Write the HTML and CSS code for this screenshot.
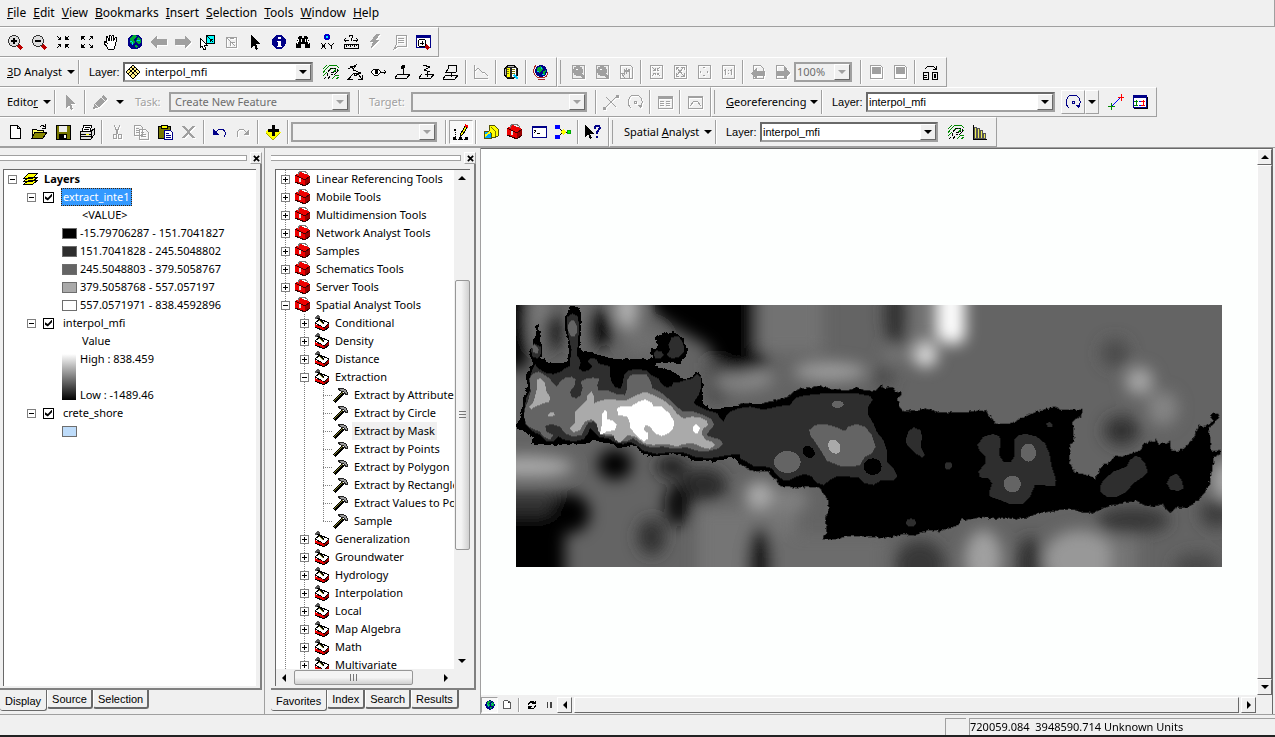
FILE: index.html
```html
<!DOCTYPE html>
<html lang="en">
<head>
    <meta charset="UTF-8">
    <meta name="viewport" content="width=device-width, initial-scale=1.0">
    <title>ArcMap</title>
    <link rel="stylesheet" href="styles.css">
</head>
<body>
    <svg class="sprite" aria-hidden="true">
        <symbol id="zoom-in" viewBox="0 0 16 16"><path d="M11 11l4 4" stroke="#b00" stroke-width="3"/><circle cx="7" cy="7" r="5.500" fill="#ddd" stroke="#333"/><path d="M4 7h6M7 4v6" stroke="#000" stroke-width="2"/></symbol>
        <symbol id="zoom-out" viewBox="0 0 16 16"><path d="M11 11l4 4" stroke="#b00" stroke-width="3"/><circle cx="7" cy="7" r="5.500" fill="#ddd" stroke="#333"/><path d="M4 7h6" stroke="#000" stroke-width="2"/></symbol>
        <symbol id="arrows-in" viewBox="0 0 16 16"><path d="M2 2l4 4M14 2l-4 4M2 14l4-4M14 14l-4-4" stroke="currentColor"/><path d="M6 2v4H2zM10 2v4h4zM6 14v-4H2zM10 14v-4h4z" fill="currentColor"/></symbol>
        <symbol id="arrows-out" viewBox="0 0 16 16"><path d="M2 2l4 4M14 2l-4 4M2 14l4-4M14 14l-4-4" stroke="currentColor"/><path d="M2 6V2h4zM14 6V2h-4zM2 10v4h4zM14 10v4h-4z" fill="currentColor"/></symbol>
        <symbol id="hand" viewBox="0 0 16 16"><path d="M5 15c0-2-3-4-4-6 0-2 2-1 3 0L3 4c0-2 2-2 2 0l1 3V2c0-1 2-1 2 0v5l1-5c0-1 2-1 2 0l-1 5 2-3c1-1 2 0 2 1-1 3-2 5-2 7l-1 3z" fill="#fff" stroke="#000"/></symbol>
        <symbol id="globe" viewBox="0 0 16 16"><circle cx="8" cy="8" r="7.500" fill="#008"/><path d="M3 4l4-3 3 1-2 3-2 1 2 2-2 3-3-2zM11 3l3 2v4l-3 1-2-3zM8 11l3 1-2 3z" fill="#0a3"/><path d="M3 7l2 1 1 3M10 6l3 1" stroke="#0cf" fill="none"/></symbol>
        <symbol id="back" viewBox="0 0 16 16"><path d="M0 8l6-7v4h10v6H6v4z" fill="#a0a0a0"/></symbol>
        <symbol id="forward" viewBox="0 0 16 16"><path d="M16 8l-6-7v4H0v6h10v4z" fill="#a0a0a0"/></symbol>
        <symbol id="select-feature" viewBox="0 0 16 16"><path d="M7 1h8v8H7z" fill="#0ff" stroke="#000"/><path d="M8 2l6 6M11 8V5h3" stroke="#000" fill="none"/><path d="M1 4v10l2-2 2 4 2-1-2-4h3z" fill="#fff" stroke="#000"/></symbol>
        <symbol id="clear-select" viewBox="0 0 16 16"><path d="M3 3h10v10H3zM4 4l8 8M7 12V8h5M7 5l4-1" stroke="#a0a0a0" fill="none"/></symbol>
        <symbol id="pointer" viewBox="0 0 16 16"><path d="M4 1v13l3-3 2 5 2-1-2-5h4z" fill="currentColor"/></symbol>
        <symbol id="info" viewBox="0 0 16 16"><circle cx="8" cy="8" r="7" fill="#008"/><path d="M7 3h3v2H7zM6 7h4v5h1v1H6v-1h1V8H6z" fill="#fff"/></symbol>
        <symbol id="binoculars" viewBox="0 0 16 16"><path d="M4 2h3v2h2V2h3l3 8v4h-5v-4H6v4H1v-4z" fill="#000"/><path d="M4 5l-2 5M6 5v3M10 5v3M12 5l2 5" stroke="#fff"/></symbol>
        <symbol id="xy" viewBox="0 0 16 16"><circle cx="8" cy="3" r="2" fill="#0ff" stroke="#00c" stroke-width="2"/><path d="M2 9l5 6M7 9l-5 6M9 9l3 3 3-3M12 12v3" stroke="#000" fill="none"/></symbol>
        <symbol id="measure" viewBox="0 0 16 16"><path d="M1 10h14v4H1zM3 11v2M5 11v1M7 11v2M9 11v1M11 11v2M13 11v1M1 6h5M10 6h5M3 4L1 6l2 2M13 4l2 2-2 2M6 3l1-2h2l1 2-2 2v2" fill="none" stroke="#000"/></symbol>
        <symbol id="bolt" viewBox="0 0 16 16"><path d="M9 0h4L9 6h3L3 16l3-8H3z" fill="#a0a0a0"/></symbol>
        <symbol id="popup" viewBox="0 0 16 16"><path d="M5 1h10v11H8l-5 3 2-4zM7 4h6M7 6h6M7 8h6" fill="none" stroke="#a0a0a0"/></symbol>
        <symbol id="viewer" viewBox="0 0 16 16"><path d="M1 1h14v12H1z" fill="#fff" stroke="#008"/><path d="M1 1h14v3H1z" fill="#008"/><path d="M10 11l4 4" stroke="#b00" stroke-width="3"/><circle cx="7" cy="9" r="4" fill="#fff" stroke="#000"/><path d="M5 9h4M7 7v4" stroke="#000"/></symbol>
        <symbol id="raster" viewBox="0 0 16 16"><path d="M8 1l7 7-7 7-7-7z" fill="#fe8" stroke="#000"/><path d="M4 5l7 7M6 3l7 7M12 5l-7 7M10 3l-7 7" stroke="#000"/></symbol>
        <symbol id="contours" viewBox="0 0 16 16"><g fill="none"><path d="M0 5l4-4M0 9l3-4 4-4h6l3 3M0 12l4-4M6 6l3-2h3l1 2-3 2H8M9 15l3-3 4-1M13 15l3-2M14 8l2-2" stroke="#080"/><path d="M1 15l3-3 1-4 3-4h5l2 3-3 3-4 1-3 4M5 15l2-4M8 8l3 1 2-2" stroke="#000" stroke-dasharray="3 1"/></g></symbol>
        <symbol id="steepest" viewBox="0 0 16 16"><path d="M1 5l8-4-3 5 8 3-6 1M2 14l5-5 1 3 3-2 4 5M3 2l4 3M4 13l-3 2h5M15 11v4h-4" stroke="#000" fill="none"/></symbol>
        <symbol id="sight" viewBox="0 0 16 16"><path d="M0 8l3-3h4l3 3-3 3H3z" fill="#fff" stroke="#000"/><path d="M4 6h3v4H4z" fill="#000"/><path d="M10 8h5M13 6l2 2-2 2" stroke="#000" fill="none"/></symbol>
        <symbol id="point3d" viewBox="0 0 16 16"><circle cx="8" cy="3" r="2" fill="#000"/><path d="M8 5v6M3 10h12l-3 4H0z" stroke="#000" fill="none"/></symbol>
        <symbol id="line3d" viewBox="0 0 16 16"><path d="M4 1l7 2-6 3 6 2M6 10h9l-3 4H0l3-4M8 8v5" stroke="#000" fill="none"/></symbol>
        <symbol id="poly3d" viewBox="0 0 16 16"><path d="M5 1h9l-1 7H3l3-4zM3 11l-3 4h12l3-4zM8 8v5" stroke="#000" fill="none"/></symbol>
        <symbol id="profile" viewBox="0 0 16 16"><path d="M1 1v13h14M1 8l4-4 4 4h2l4 4" stroke="#a0a0a0" fill="none"/></symbol>
        <symbol id="catalog" viewBox="0 0 16 16"><circle cx="8" cy="8" r="7" fill="#bbb" stroke="#000"/><path d="M3 3h4v10H3z" fill="#ff0" stroke="#222"/><path d="M8 3h5v10H8z" fill="#fff" stroke="#222"/><path d="M4 5h2M4 7h2M4 9h2M9 5h3M9 7h3M9 9h3" stroke="#770"/><path d="M11 11l4 4" stroke="#0cf" stroke-width="2"/></symbol>
        <symbol id="scene" viewBox="0 0 16 16"><circle cx="8" cy="7" r="6" fill="#008"/><path d="M4 4l4-2 2 3-3 4-3-1zM10 7l3-1-1 5-2-1z" fill="#0a3"/><path d="M3 1C-2 7 2 14 8 14s6-3 7-6M5 15h7" stroke="#a22" fill="none"/><path d="M4 7h2M8 3v2M9 10h2" stroke="#0cf"/></symbol>
        <symbol id="page-zoom" viewBox="0 0 16 16"><path d="M2 1h12v13H2z" stroke="#a0a0a0" fill="#eee"/><circle cx="8" cy="7" r="5" fill="#a0a0a0"/><path d="M10 9l4 5" stroke="#a0a0a0" stroke-width="3"/><path d="M6 5h2v1H6z" fill="#fff"/></symbol>
        <symbol id="page-hand" viewBox="0 0 16 16"><path d="M2 1h10l2 2v11H2z" stroke="#a0a0a0" fill="none"/><path d="M7 14l-4-5 3 1V5l2 3V4l2 4 1-3 1 4-1 5z" fill="#eee" stroke="#a0a0a0"/></symbol>
        <symbol id="page-in" viewBox="0 0 16 16"><path d="M2 1h12v13H2z" stroke="#a0a0a0" fill="none"/><path d="M4 3l3 3M12 3L9 6M4 12l3-3M12 12L9 9M7 4v2H5M9 4v2h2M7 11V9H5M9 11V9h2" stroke="#a0a0a0" fill="none"/></symbol>
        <symbol id="page-out" viewBox="0 0 16 16"><path d="M2 1h12v13H2z" stroke="#a0a0a0" fill="none"/><path d="M4 3l8 9M12 3l-8 9M4 6V3h3M12 6V3H9M4 9v3h3M12 9v3H9" stroke="#a0a0a0" fill="none"/></symbol>
        <symbol id="page-whole" viewBox="0 0 16 16"><path d="M2 1h12v13H2z" stroke="#a0a0a0" fill="none"/><path d="M7 3h2v1H7zM7 11h2v1H7zM4 7h1v2H4zM11 7h1v2h-1z" fill="#a0a0a0"/></symbol>
        <symbol id="page-one" viewBox="0 0 16 16"><path d="M2 1h12v13H2zM5 5v6M4 6h1M11 5v6M10 6h1M8 6v1M8 9v1" stroke="#a0a0a0" fill="none"/></symbol>
        <symbol id="page-back" viewBox="0 0 16 16"><path d="M3 1h7l3 3v10H3z" stroke="#a0a0a0" fill="none"/><path d="M1 9l6-6v4h8v5H7v4z" fill="#a0a0a0"/></symbol>
        <symbol id="page-forward" viewBox="0 0 16 16"><path d="M2 1h7l3 3v10H2z" stroke="#a0a0a0" fill="none"/><path d="M16 9l-6-6v4H2v5h8v4z" fill="#a0a0a0"/></symbol>
        <symbol id="draft" viewBox="0 0 16 16"><path d="M2 1h10l2 2v11H2z" stroke="#a0a0a0" fill="#fff"/><path d="M4 3h9v7H4z" fill="#a0a0a0"/></symbol>
        <symbol id="swap" viewBox="0 0 16 16"><path d="M1 8h5v7H1zM10 8h5v7h-5zM2 11h3M2 13h3M12 10h1v3h-1zM3 5l3-3h5l3 3M14 2v3h-3" stroke="#000" fill="none"/></symbol>
        <symbol id="pencil" viewBox="0 0 16 16"><path d="M1 15l2-6 8-8 4 4-8 8z" fill="#a0a0a0"/><path d="M9 3l4 4M3 10l3 3" stroke="#eee"/></symbol>
        <symbol id="split" viewBox="0 0 16 16"><path d="M3 3l10 10M2 14L14 2M8 8l2-2" stroke="#a0a0a0" fill="none"/><path d="M0 13h3v3H0zM13 1h3v3h-3z" fill="#a0a0a0"/></symbol>
        <symbol id="rotate" viewBox="0 0 16 16"><path d="M4 14C-1 10 1 1 8 1s9 8 5 12" stroke="currentColor" fill="none"/><path d="M7 7h2v2H7z" fill="none" stroke="currentColor"/><path d="M11 11h4l-1 4z" fill="currentColor"/></symbol>
        <symbol id="attributes" viewBox="0 0 16 16"><path d="M1 2h14v12H1z" stroke="#a0a0a0" fill="none"/><path d="M1 2h14v3H1zM3 7h4v1H3zM9 7h4v1H9zM3 9h4v1H3zM9 9h4v1H9zM3 11h4v1H3zM9 11h4v1H9z" fill="#a0a0a0"/></symbol>
        <symbol id="sketch-props" viewBox="0 0 16 16"><path d="M1 2h14v12H1z" stroke="#a0a0a0" fill="none"/><path d="M1 2h14v2H1z" fill="#a0a0a0"/><path d="M3 12l4-5h3l4 5" stroke="#a0a0a0" fill="none"/></symbol>
        <symbol id="control-points" viewBox="0 0 16 16"><path d="M4 12l8-8" stroke="#00f"/><path d="M3 9v7M0 12h7" stroke="#080"/><path d="M13 0v7M10 3h6" stroke="#f00"/></symbol>
        <symbol id="link-table" viewBox="0 0 16 16"><path d="M2 3h14v12H2z" fill="#000"/><path d="M1 2h13v11H1z" fill="#fff" stroke="#008"/><path d="M1 1h14v3H1z" fill="#008"/><path d="M2 7h4M4 6v3M2 11h4M4 9v3" stroke="#080"/><path d="M9 7h4M11 6v3M9 11h4M11 9v3" stroke="#f00"/><path d="M7 7h2M7 11h2" stroke="#00f"/></symbol>
        <symbol id="new" viewBox="0 0 16 16"><path d="M3 1h7l3 3v10H3zM10 1v3h3" fill="#fff" stroke="#000"/></symbol>
        <symbol id="open" viewBox="0 0 16 16"><path d="M1 14V5h4l1 1h6v3" fill="#ff6" stroke="#000"/><path d="M1 14l3-6h12l-4 6z" fill="#880" stroke="#000"/><path d="M9 3l2-2 3 2M14 0v4h-3" stroke="#000" fill="none"/></symbol>
        <symbol id="save" viewBox="0 0 16 16"><path d="M1 1h14v14H1z" fill="#770" stroke="#000"/><path d="M4 2h8v6H4z" fill="#eee"/><path d="M4 10h8v5H4z" fill="#000"/><path d="M9 11h2v3H9z" fill="#fff"/></symbol>
        <symbol id="print" viewBox="0 0 16 16"><path d="M5 1h8l-2 6H3z" fill="#fff" stroke="#000"/><path d="M6 3h5M5 5h5" stroke="#000"/><path d="M1 7h11l3-2v6l-3 4H1z" fill="#ddd" stroke="#000"/><path d="M1 10h11M1 12h11M12 7v8" stroke="#000"/><path d="M7 10h3v1H7z" fill="#ff0"/></symbol>
        <symbol id="cut" viewBox="0 0 16 16"><path d="M5 1l4 9M11 1L7 10" stroke="#a0a0a0"/><path d="M4 10h3v4H4zM9 10h3v4H9z" stroke="#a0a0a0" fill="none"/></symbol>
        <symbol id="copy" viewBox="0 0 16 16"><path d="M1 1h6l2 2v8H1zM6 5h6l3 3v7H6zM3 4h3M3 6h3M3 8h3M8 8h3M8 10h5M8 12h5" stroke="#a0a0a0" fill="none"/></symbol>
        <symbol id="paste" viewBox="0 0 16 16"><path d="M1 2h12v12H1z" fill="#770" stroke="#000"/><path d="M4 1h6v3H4z" fill="#ff0" stroke="#000"/><path d="M7 6h6l2 2v7H7z" fill="#fff" stroke="#008"/><path d="M9 9h3M9 11h5M9 13h5" stroke="#008"/></symbol>
        <symbol id="delete" viewBox="0 0 16 16"><path d="M2 2l11 12M13 2L2 14" stroke="#a0a0a0" stroke-width="2"/></symbol>
        <symbol id="undo" viewBox="0 0 16 16"><path d="M4 9l4-4h4l2 3v3l-1 2" stroke="#008" fill="none"/><path d="M2 5v6h6z" fill="#008"/></symbol>
        <symbol id="redo" viewBox="0 0 16 16"><path d="M12 9L8 5H5L2 8v3l1 2" stroke="#a0a0a0" fill="none"/><path d="M14 5v6H8z" fill="#a0a0a0"/></symbol>
        <symbol id="add-data" viewBox="0 0 16 16"><path d="M0 8l4-3h8l4 3-8 8z" fill="#ff0"/><path d="M1 9l7 7 7-7" stroke="#aa0" fill="none"/><path d="M7 1h3v4h4v3h-4v4H7V8H3V5h4z" fill="#000"/></symbol>
        <symbol id="editor-bar" viewBox="0 0 16 16"><path d="M0 13h3v3H0zM1 5h2v2H1zM6 13h3v3H6zM12 13h3v3h-3z" fill="#000"/><path d="M2 8v5M3 15h9" stroke="#000" stroke-dasharray="1 1"/><path d="M7 13l1-4 5-8 2 1-5 8z" fill="#ff0" stroke="#000"/><path d="M12 1l3 2" stroke="#f00" stroke-width="2"/></symbol>
        <symbol id="arc-catalog" viewBox="0 0 16 16"><path d="M6 1h5l4 4v7l-5 2-4-4z" fill="#ff0" stroke="#550"/><path d="M8 3l4 4v5" stroke="#770" fill="none"/><path d="M1 7h5l2 2v5H1z" fill="#0af" stroke="#550"/><path d="M2 12l5-4" stroke="#ff0" stroke-width="2"/></symbol>
        <symbol id="toolbox" viewBox="0 0 16 16"><path d="M0 4l6-3 9 4v6l-5 4-10-4z" fill="#e00"/><path d="M10 9l5-4v6l-5 4z" fill="#900"/><path d="M0 4l10 5 5-4" stroke="#400" fill="none"/><path d="M0 11l10 4 5-4" stroke="#300" fill="none"/><path d="M3 4V2l3-2h3l3 2v2" stroke="#777" fill="none"/><path d="M4 7h2v4H4z" fill="#ddd"/></symbol>
        <symbol id="toolset" viewBox="0 0 16 16"><path d="M1 8l5-4 9 4-5 5z" fill="#fff" stroke="#000"/><path d="M1 9l9 4v3l-9-4z" fill="#e00"/><path d="M10 13l5-4v3l-5 4z" fill="#900"/><path d="M1 12l9 4 5-4" stroke="#000" fill="none"/><path d="M3 2l7 7" stroke="#000" stroke-width="2"/><path d="M5 5l4 4" stroke="#aa4"/><path d="M1 4l3-3 2 2" stroke="#555" stroke-width="2" fill="none"/></symbol>
        <symbol id="hammer" viewBox="0 0 16 16"><path d="M1 15L10 6" stroke="#000" stroke-width="3"/><path d="M1 14l9-9" stroke="#883"/><path d="M5 2l4-1 4 2 2 4-2 1-2-3-3-1z" fill="#999" stroke="#222"/></symbol>
        <symbol id="command" viewBox="0 0 16 16"><path d="M1 2h14v11H1z" fill="#fff" stroke="#008"/><path d="M1 2h14v2H1z" fill="#008"/><path d="M3 6l2 1-2 2M6 9h3" stroke="#000" fill="none"/></symbol>
        <symbol id="model" viewBox="0 0 16 16"><path d="M3 3l5 5h6M3 13l5-5" stroke="#000" fill="none"/><path d="M0 1h5v4H0zM0 11h5v4H0z" fill="#00f"/><path d="M8 5l3 3-3 3-3-3z" fill="#ff0"/><circle cx="14" cy="8" r="2" fill="#0f0" stroke="#0a0"/></symbol>
        <symbol id="whats-this" viewBox="0 0 16 16"><path d="M0 1v12l3-3 2 5 2-1-2-4h4z" fill="#000"/><path d="M10 5V3l1-1h3l1 2-3 4v2" stroke="#008" stroke-width="2" fill="none"/><path d="M11 12h2v2h-2z" fill="#008"/></symbol>
        <symbol id="histogram" viewBox="0 0 16 16"><path d="M2 3h2v11H2zM5 4h2v10H5zM8 6h2v8H8zM11 9h2v5h-2z" fill="#ee5" stroke="#555"/><path d="M1 1v14h14" stroke="#000" fill="none"/></symbol>
        <symbol id="layers" viewBox="0 0 16 16"><path d="M1 13h9l5-4H6zM1 10h9l5-4H6zM1 7h9l5-5H6z" fill="#ff0" stroke="#000"/></symbol>
        <symbol id="refresh" viewBox="0 0 16 16"><path d="M2 7l3-4h5l3 2M13 1v5H8M14 9l-3 4H6l-3-2M3 15v-5h5" stroke="#000" fill="none" stroke-width="2"/></symbol>
        <symbol id="close" viewBox="0 0 8 8"><path d="M1 1l6 6M7 1L1 7" stroke="#000" stroke-width="2"/></symbol>
        <symbol id="pause" viewBox="0 0 16 16"><path d="M4 3h3v10H4zM9 3h3v10H9z" fill="#444"/></symbol>
    </svg>

    <nav class="menubar">
        <a href="#"><u>F</u>ile</a>
        <a href="#"><u>E</u>dit</a>
        <a href="#"><u>V</u>iew</a>
        <a href="#"><u>B</u>ookmarks</a>
        <a href="#"><u>I</u>nsert</a>
        <a href="#"><u>S</u>election</a>
        <a href="#"><u>T</u>ools</a>
        <a href="#"><u>W</u>indow</a>
        <a href="#"><u>H</u>elp</a>
    </nav>

    <div class="toolbar-row">
        <div class="toolbar">
            <button class="tool" aria-label="Zoom in"><svg><use href="#zoom-in"/></svg></button>
            <button class="tool" aria-label="Zoom out"><svg><use href="#zoom-out"/></svg></button>
            <button class="tool" aria-label="Fixed zoom in"><svg><use href="#arrows-in"/></svg></button>
            <button class="tool" aria-label="Fixed zoom out"><svg><use href="#arrows-out"/></svg></button>
            <button class="tool" aria-label="Pan"><svg><use href="#hand"/></svg></button>
            <button class="tool" aria-label="Full extent"><svg><use href="#globe"/></svg></button>
            <button class="tool" aria-label="Previous extent" disabled><svg><use href="#back"/></svg></button>
            <button class="tool" aria-label="Next extent" disabled><svg><use href="#forward"/></svg></button>
            <button class="tool" aria-label="Select features"><svg><use href="#select-feature"/></svg></button>
            <button class="tool" aria-label="Clear selection" disabled><svg><use href="#clear-select"/></svg></button>
            <button class="tool" aria-label="Select elements"><svg><use href="#pointer"/></svg></button>
            <button class="tool" aria-label="Identify"><svg><use href="#info"/></svg></button>
            <button class="tool" aria-label="Find"><svg><use href="#binoculars"/></svg></button>
            <button class="tool" aria-label="Go to XY"><svg><use href="#xy"/></svg></button>
            <button class="tool" aria-label="Measure"><svg><use href="#measure"/></svg></button>
            <button class="tool" aria-label="Hyperlink" disabled><svg><use href="#bolt"/></svg></button>
            <button class="tool" aria-label="HTML popup" disabled><svg><use href="#popup"/></svg></button>
            <button class="tool" aria-label="Create viewer"><svg><use href="#viewer"/></svg></button>
        </div>
    </div>

    <div class="toolbar-row">
        <div class="toolbar">
            <button class="menu-button menu-3d"><span><u>3</u>D Analyst</span><i class="caret"></i></button>
            <span class="sep"></span>
            <label class="tool-label" for="layer3d">Layer:</label>
            <div class="combo combo-3d">
                <svg><use href="#raster"/></svg>
                <select id="layer3d" class="ui-text"><option>interpol_mfi</option></select>
                <span class="drop"><i class="caret"></i></span>
            </div>
            <button class="tool" aria-label="Contour"><svg><use href="#contours"/></svg></button>
            <button class="tool" aria-label="Steepest path"><svg><use href="#steepest"/></svg></button>
            <button class="tool" aria-label="Line of sight"><svg><use href="#sight"/></svg></button>
            <button class="tool" aria-label="Interpolate point"><svg><use href="#point3d"/></svg></button>
            <button class="tool" aria-label="Interpolate line"><svg><use href="#line3d"/></svg></button>
            <button class="tool" aria-label="Interpolate polygon"><svg><use href="#poly3d"/></svg></button>
            <span class="sep"></span>
            <button class="tool" aria-label="Profile graph" disabled><svg><use href="#profile"/></svg></button>
            <span class="sep"></span>
            <button class="tool" aria-label="ArcCatalog"><svg><use href="#catalog"/></svg></button>
            <span class="sep"></span>
            <button class="tool" aria-label="ArcScene"><svg><use href="#scene"/></svg></button>
        </div>
        <div class="toolbar docked">
            <span class="grip"></span>
            <button class="tool" aria-label="Zoom in page" disabled><svg><use href="#page-zoom"/></svg></button>
            <button class="tool" aria-label="Zoom out page" disabled><svg><use href="#page-zoom"/></svg></button>
            <button class="tool" aria-label="Pan page" disabled><svg><use href="#page-hand"/></svg></button>
            <span class="sep"></span>
            <button class="tool" aria-label="Fixed zoom in page" disabled><svg><use href="#page-in"/></svg></button>
            <button class="tool" aria-label="Fixed zoom out page" disabled><svg><use href="#page-out"/></svg></button>
            <button class="tool" aria-label="Whole page" disabled><svg><use href="#page-whole"/></svg></button>
            <button class="tool" aria-label="Zoom to 100%" disabled><svg><use href="#page-one"/></svg></button>
            <span class="sep"></span>
            <button class="tool" aria-label="Back extent" disabled><svg><use href="#page-back"/></svg></button>
            <button class="tool" aria-label="Forward extent" disabled><svg><use href="#page-forward"/></svg></button>
            <div class="combo combo-zoom disabled">
                <select class="ui-text" aria-label="Page zoom" disabled><option>100%</option></select>
                <span class="drop"><i class="caret"></i></span>
            </div>
            <span class="sep"></span>
            <button class="tool" aria-label="Draft mode" disabled><svg><use href="#draft"/></svg></button>
            <button class="tool" aria-label="Focus data frame" disabled><svg><use href="#draft"/></svg></button>
            <span class="sep"></span>
            <button class="tool" aria-label="Change layout"><svg><use href="#swap"/></svg></button>
        </div>
    </div>

    <div class="toolbar-row">
        <div class="toolbar">
            <button class="menu-button menu-editor"><span>Edito<u>r</u></span><i class="caret"></i></button>
            <span class="sep"></span>
            <button class="tool" aria-label="Edit tool" disabled><svg><use href="#pointer"/></svg></button>
            <span class="sep"></span>
            <button class="tool" aria-label="Sketch tool" disabled><svg><use href="#pencil"/></svg></button>
            <button class="drop-only" aria-label="Sketch tools"><i class="caret"></i></button>
            <label class="tool-label ui-text off" for="task">Task:</label>
            <div class="combo combo-task disabled">
                <select id="task" class="ui-text" disabled><option>Create New Feature</option></select>
                <span class="drop"><i class="caret"></i></span>
            </div>
            <span class="sep"></span>
            <label class="tool-label ui-text off wide" for="target">Target:</label>
            <div class="combo combo-target disabled">
                <select id="target" disabled></select>
                <span class="drop"><i class="caret"></i></span>
            </div>
            <span class="sep"></span>
            <button class="tool" aria-label="Split" disabled><svg><use href="#split"/></svg></button>
            <button class="tool" aria-label="Rotate" disabled><svg><use href="#rotate"/></svg></button>
            <span class="sep"></span>
            <button class="tool" aria-label="Attributes" disabled><svg><use href="#attributes"/></svg></button>
            <span class="sep"></span>
            <button class="tool" aria-label="Sketch properties" disabled><svg><use href="#sketch-props"/></svg></button>
        </div>
        <div class="toolbar docked docked-menu">
            <span class="grip"></span>
            <button class="menu-button menu-georef"><span><u>G</u>eoreferencing</span><i class="caret"></i></button>
            <span class="sep"></span>
            <label class="tool-label" for="georefLayer">Layer:</label>
            <div class="combo combo-georef">
                <select id="georefLayer"><option>interpol_mfi</option></select>
                <span class="drop"><i class="caret"></i></span>
            </div>
            <button class="tool raised navy" aria-label="Rotate raster"><svg><use href="#rotate"/></svg></button>
            <button class="drop-only raised" aria-label="Rotate options"><i class="caret"></i></button>
            <button class="tool" aria-label="Add control points"><svg><use href="#control-points"/></svg></button>
            <button class="tool" aria-label="View link table"><svg><use href="#link-table"/></svg></button>
        </div>
    </div>

    <div class="toolbar-row">
        <div class="toolbar">
            <button class="tool" aria-label="New"><svg><use href="#new"/></svg></button>
            <button class="tool" aria-label="Open"><svg><use href="#open"/></svg></button>
            <button class="tool" aria-label="Save"><svg><use href="#save"/></svg></button>
            <button class="tool" aria-label="Print"><svg><use href="#print"/></svg></button>
            <span class="sep"></span>
            <button class="tool" aria-label="Cut" disabled><svg><use href="#cut"/></svg></button>
            <button class="tool" aria-label="Copy" disabled><svg><use href="#copy"/></svg></button>
            <button class="tool" aria-label="Paste"><svg><use href="#paste"/></svg></button>
            <button class="tool" aria-label="Delete" disabled><svg><use href="#delete"/></svg></button>
            <span class="sep"></span>
            <button class="tool" aria-label="Undo"><svg><use href="#undo"/></svg></button>
            <button class="tool" aria-label="Redo" disabled><svg><use href="#redo"/></svg></button>
            <span class="sep"></span>
            <button class="tool" aria-label="Add data"><svg><use href="#add-data"/></svg></button>
            <span class="sep"></span>
            <div class="combo combo-scale disabled">
                <select aria-label="Map scale" disabled></select>
                <span class="drop"><i class="caret"></i></span>
            </div>
            <span class="sep"></span>
            <button class="tool pressed" aria-label="Editor toolbar"><svg><use href="#editor-bar"/></svg></button>
            <span class="sep"></span>
            <button class="tool" aria-label="ArcCatalog"><svg><use href="#arc-catalog"/></svg></button>
            <button class="tool" aria-label="ArcToolbox"><svg><use href="#toolbox"/></svg></button>
            <button class="tool" aria-label="Command line"><svg><use href="#command"/></svg></button>
            <button class="tool" aria-label="ModelBuilder"><svg><use href="#model"/></svg></button>
            <span class="sep"></span>
            <button class="tool" aria-label="What's this?"><svg><use href="#whats-this"/></svg></button>
        </div>
        <div class="toolbar docked docked-menu">
            <span class="grip"></span>
            <button class="menu-button menu-spatial"><span>Spatial <u>A</u>nalyst</span><i class="caret"></i></button>
            <span class="sep"></span>
            <label class="tool-label" for="saLayer">Layer:</label>
            <div class="combo combo-spatial">
                <select id="saLayer"><option>interpol_mfi</option></select>
                <span class="drop"><i class="caret"></i></span>
            </div>
            <button class="tool" aria-label="Create contour"><svg><use href="#contours"/></svg></button>
            <button class="tool" aria-label="Histogram"><svg><use href="#histogram"/></svg></button>
        </div>
    </div>

    <main class="workspace">
        <section class="panel panel-toc">
            <div class="panel-head"><span class="handle"></span><button class="close" aria-label="Close"><svg><use href="#close"/></svg></button></div>
            <div class="panel-frame">
                <ul class="toc">
                    <li class="root"><button class="box minus" aria-label="Collapse"></button><svg><use href="#layers"/></svg><b>Layers</b></li>
                    <li class="layer"><button class="box minus" aria-label="Collapse"></button><input type="checkbox" id="l1" checked><label class="selected" for="l1">extract_inte1</label></li>
                    <li class="heading">&lt;VALUE&gt;</li>
                    <li class="legend"><i class="swatch s1"></i>-15.79706287 - 151.7041827</li>
                    <li class="legend"><i class="swatch s2"></i>151.7041828 - 245.5048802</li>
                    <li class="legend"><i class="swatch s3"></i>245.5048803 - 379.5058767</li>
                    <li class="legend"><i class="swatch s4"></i>379.5058768 - 557.057197</li>
                    <li class="legend"><i class="swatch s5"></i>557.0571971 - 838.4592896</li>
                    <li class="layer"><button class="box minus" aria-label="Collapse"></button><input type="checkbox" id="l2" checked><label for="l2">interpol_mfi</label></li>
                    <li class="heading">Value</li>
                    <li class="ramp-row"><i class="ramp"></i><div><span>High : 838.459</span><span>Low : -1489.46</span></div></li>
                    <li class="layer"><button class="box minus" aria-label="Collapse"></button><input type="checkbox" id="l3" checked><label for="l3">crete_shore</label></li>
                    <li class="legend"><i class="swatch s6"></i></li>
                </ul>
            </div>
            <div class="tabs">
                <button class="tab active">Display</button>
                <button class="tab">Source</button>
                <button class="tab">Selection</button>
            </div>
        </section>

        <section class="panel panel-toolbox">
            <div class="panel-head"><span class="handle"></span><button class="close" aria-label="Close"><svg><use href="#close"/></svg></button></div>
            <div class="panel-frame">
                <div class="tree-area">
                    <ul class="tree">
                        <li><span class="guide"><button class="box plus" aria-label="Expand"></button></span><svg><use href="#toolbox"/></svg>Linear Referencing Tools</li>
                        <li><span class="guide"><button class="box plus" aria-label="Expand"></button></span><svg><use href="#toolbox"/></svg>Mobile Tools</li>
                        <li><span class="guide"><button class="box plus" aria-label="Expand"></button></span><svg><use href="#toolbox"/></svg>Multidimension Tools</li>
                        <li><span class="guide"><button class="box plus" aria-label="Expand"></button></span><svg><use href="#toolbox"/></svg>Network Analyst Tools</li>
                        <li><span class="guide"><button class="box plus" aria-label="Expand"></button></span><svg><use href="#toolbox"/></svg>Samples</li>
                        <li><span class="guide"><button class="box plus" aria-label="Expand"></button></span><svg><use href="#toolbox"/></svg>Schematics Tools</li>
                        <li><span class="guide"><button class="box plus" aria-label="Expand"></button></span><svg><use href="#toolbox"/></svg>Server Tools</li>
                        <li><span class="guide"><button class="box minus" aria-label="Collapse"></button></span><svg><use href="#toolbox"/></svg>Spatial Analyst Tools</li>
                        <li><span class="guide"></span><span class="guide"><button class="box plus" aria-label="Expand"></button></span><svg><use href="#toolset"/></svg>Conditional</li>
                        <li><span class="guide"></span><span class="guide"><button class="box plus" aria-label="Expand"></button></span><svg><use href="#toolset"/></svg>Density</li>
                        <li><span class="guide"></span><span class="guide"><button class="box plus" aria-label="Expand"></button></span><svg><use href="#toolset"/></svg>Distance</li>
                        <li><span class="guide"></span><span class="guide"><button class="box minus" aria-label="Collapse"></button></span><svg><use href="#toolset"/></svg>Extraction</li>
                        <li><span class="guide"></span><span class="guide"></span><span class="guide leaf"></span><svg><use href="#hammer"/></svg>Extract by Attributes</li>
                        <li><span class="guide"></span><span class="guide"></span><span class="guide leaf"></span><svg><use href="#hammer"/></svg>Extract by Circle</li>
                        <li><span class="guide"></span><span class="guide"></span><span class="guide leaf"></span><svg><use href="#hammer"/></svg><span class="hot">Extract by Mask</span></li>
                        <li><span class="guide"></span><span class="guide"></span><span class="guide leaf"></span><svg><use href="#hammer"/></svg>Extract by Points</li>
                        <li><span class="guide"></span><span class="guide"></span><span class="guide leaf"></span><svg><use href="#hammer"/></svg>Extract by Polygon</li>
                        <li><span class="guide"></span><span class="guide"></span><span class="guide leaf"></span><svg><use href="#hammer"/></svg>Extract by Rectangle</li>
                        <li><span class="guide"></span><span class="guide"></span><span class="guide leaf"></span><svg><use href="#hammer"/></svg>Extract Values to Points</li>
                        <li><span class="guide"></span><span class="guide"></span><span class="guide leaf last"></span><svg><use href="#hammer"/></svg>Sample</li>
                        <li><span class="guide"></span><span class="guide"><button class="box plus" aria-label="Expand"></button></span><svg><use href="#toolset"/></svg>Generalization</li>
                        <li><span class="guide"></span><span class="guide"><button class="box plus" aria-label="Expand"></button></span><svg><use href="#toolset"/></svg>Groundwater</li>
                        <li><span class="guide"></span><span class="guide"><button class="box plus" aria-label="Expand"></button></span><svg><use href="#toolset"/></svg>Hydrology</li>
                        <li><span class="guide"></span><span class="guide"><button class="box plus" aria-label="Expand"></button></span><svg><use href="#toolset"/></svg>Interpolation</li>
                        <li><span class="guide"></span><span class="guide"><button class="box plus" aria-label="Expand"></button></span><svg><use href="#toolset"/></svg>Local</li>
                        <li><span class="guide"></span><span class="guide"><button class="box plus" aria-label="Expand"></button></span><svg><use href="#toolset"/></svg>Map Algebra</li>
                        <li><span class="guide"></span><span class="guide"><button class="box plus" aria-label="Expand"></button></span><svg><use href="#toolset"/></svg>Math</li>
                        <li><span class="guide"></span><span class="guide"><button class="box plus" aria-label="Expand"></button></span><svg><use href="#toolset"/></svg>Multivariate</li>
                    </ul>
                    <div class="vscroll">
                        <i class="tri up"></i>
                        <span class="track"><span class="thumb"></span></span>
                        <i class="tri down"></i>
                    </div>
                </div>
                <div class="hscroll">
                    <i class="tri left"></i>
                    <span class="track"><span class="thumb"></span></span>
                    <i class="tri right"></i>
                </div>
            </div>
            <div class="tabs">
                <button class="tab active">Favorites</button>
                <button class="tab">Index</button>
                <button class="tab">Search</button>
                <button class="tab">Results</button>
            </div>
        </section>

        <section class="view">
            <div class="view-body">
                <div class="canvas">
                    <svg class="map" viewBox="0 0 2118 786" role="img" aria-label="Interpolated raster clipped to the Crete shoreline">
                        <defs>
                            <filter id="soft" x="-10%" y="-10%" width="120%" height="120%"><feGaussianBlur stdDeviation="22"/></filter>
                            <filter id="coast" x="0" y="0" width="100%" height="100%"><feTurbulence type="fractalNoise" baseFrequency="0.09" numOctaves="2" seed="4"/><feDisplacementMap in="SourceGraphic" scale="10" xChannelSelector="R" yChannelSelector="G"/></filter>
                        </defs>
                        <rect width="2118" height="786" fill="#646464"/>
                        <!-- interpolated surface -->
                        <g filter="url(#soft)">
                            <g transform="translate(-18 -15)">
                                <path d="M560 620h300v240H560z" fill="#747474"/>
                                <path d="M-40-40h90v245H-40z" fill="#000"/>
                                <path d="M400-60h370v265l-60 30h-60l-60-100-90-50-60-40z" fill="#000"/>
                                <path d="M590 190h60v110h-60z" fill="#444"/>
                                <ellipse cx="90" cy="60" rx="28" ry="80" fill="#808080"/>
                                <ellipse cx="210" cy="60" rx="20" ry="80" fill="#777"/>
                                <ellipse cx="130" cy="95" rx="30" ry="55" fill="#181818"/>
                                <ellipse cx="270" cy="85" rx="40" ry="58" fill="#0c0c0c"/>
                                <ellipse cx="350" cy="25" rx="36" ry="60" fill="#b0b0b0"/>
                                <ellipse cx="400" cy="120" rx="60" ry="40" fill="#707070"/>
                                <ellipse cx="690" cy="245" rx="80" ry="28" fill="#848484"/>
                                <ellipse cx="50" cy="500" rx="140" ry="32" fill="#a8a8a8"/>
                                <path d="M-40 580h190v70H-40z" fill="#303030"/>
                                <path d="M-40 645h205v240H-40z" fill="#000"/>
                                <circle cx="180" cy="640" r="60" fill="#000"/>
                                <ellipse cx="315" cy="493" rx="52" ry="46" fill="#000"/>
                                <ellipse cx="485" cy="500" rx="48" ry="34" fill="#202020"/>
                                <ellipse cx="580" cy="555" rx="70" ry="50" fill="#2c2c2c"/>
                                <ellipse cx="505" cy="615" rx="42" ry="65" fill="#101010"/>
                                <ellipse cx="425" cy="710" rx="42" ry="55" fill="#303030"/>
                            </g>
                            <g transform="translate(672 -15)">
                                <path d="M-10-60h45v265h-45z" fill="#000"/>
                                <path d="M50-60h200v220H50z" fill="#727272"/>
                                <path d="M490-60h110v180H490z" fill="#747474"/>
                                <ellipse cx="55" cy="235" rx="45" ry="28" fill="#888"/>
                                <ellipse cx="270" cy="215" rx="110" ry="28" fill="#9c9c9c"/>
                                <ellipse cx="470" cy="45" rx="38" ry="100" fill="#303030"/>
                                <circle cx="430" cy="232" r="30" fill="#484848"/>
                                <ellipse cx="470" cy="160" rx="40" ry="25" fill="#777"/>
                                <path d="M598-60h78v180l-39 15-39-15z" fill="#fff"/>
                                <circle cx="557" cy="165" r="36" fill="#e0e0e0"/>
                                <ellipse cx="60" cy="585" rx="44" ry="40" fill="#acacac"/>
                                <ellipse cx="145" cy="600" rx="60" ry="38" fill="#808080"/>
                                <ellipse cx="60" cy="790" rx="38" ry="110" fill="#080808"/>
                                <path d="M110 700h330v160H110z" fill="#6c6c6c"/>
                                <ellipse cx="540" cy="795" rx="75" ry="75" fill="#383838"/>
                            </g>
                            <g transform="translate(1392 -15)">
                                <circle cx="405" cy="160" r="42" fill="#4c4c4c"/>
                                <circle cx="478" cy="243" r="42" fill="#a4a4a4"/>
                                <ellipse cx="548" cy="325" rx="46" ry="52" fill="#848484"/>
                                <ellipse cx="425" cy="392" rx="52" ry="44" fill="#303030"/>
                                <ellipse cx="460" cy="660" rx="110" ry="40" fill="#383838"/>
                                <ellipse cx="10" cy="775" rx="55" ry="85" fill="#a0a0a0"/>
                                <ellipse cx="150" cy="790" rx="38" ry="80" fill="#303030"/>
                                <ellipse cx="300" cy="780" rx="110" ry="90" fill="#989898"/>
                                <path d="M390 710h80v150h-80z" fill="#747474"/>
                                <ellipse cx="650" cy="800" rx="70" ry="40" fill="#484848"/>
                                <ellipse cx="710" cy="640" rx="50" ry="44" fill="#3c3c3c"/>
                                <ellipse cx="740" cy="540" rx="44" ry="60" fill="#a4a4a4"/>
                            </g>
                        </g>
                        <!-- class 1: coastline silhouette -->
                        <g fill="#000" filter="url(#coast)" shape-rendering="crispEdges">
                            <path transform="translate(-18 -15)" d="M18 375L30 360 35 345 32 330 40 315 40 290 48 285 45 265 55 260 48 235 50 220 60 210 58 200 70 195 68 180 60 170 58 150 68 140 68 120 78 108 76 75 86 75 84 90 92 92 90 125 97 135 97 165 92 175 105 178 115 188 145 190 172 186 175 170 178 150 172 110 165 85 164 55 172 40 178 22 190 18 205 24 212 38 212 65 214 90 210 115 208 145 220 152 245 158 270 166 305 174 340 178 380 177 420 178 432 170 420 160 425 145 440 148 445 135 435 118 437 108 455 104 468 97 480 98 492 97 505 105 520 115 526 135 532 150 528 170 515 180 512 192 495 190 478 188 465 190 450 184 432 195 455 205 480 210 500 222 515 232 530 240 545 230 560 216 572 225 578 250 577 280 580 300 582 315 600 325 625 328 645 322 665 320 690 316 715 312 760 312 760 515 730 505 720 508 712 495 690 490 680 480 665 470 645 478 622 482 610 488 590 480 560 484 540 478 530 468 510 466 490 460 465 465 440 468 425 470 405 465 390 455 382 440 365 435 350 440 325 445 310 432 290 430 270 426 255 418 235 430 215 434 195 430 160 432 140 438 125 432 110 436 90 430 78 438 65 430 68 415 60 403 45 400 38 390 22 388z"/>
                            <path transform="translate(672 -15)" d="M-5 312L20 310 45 315 75 308 110 300 145 290 160 275 180 265 215 262 240 255 250 263 280 264 300 270 325 270 355 262 370 270 405 274 418 262 424 250 430 265 445 262 458 262 468 275 485 278 475 295 478 320 490 333 530 332 555 326 575 330 595 337 650 337 700 335 735 332 760 360 760 645 730 650 700 655 680 660 665 658 655 675 630 685 600 693 570 690 540 697 525 708 490 702 465 710 420 714 380 710 350 710 320 708 300 715 270 720 248 718 250 708 258 700 257 650 266 640 264 600 250 580 238 563 200 560 170 562 120 558 110 540 95 530 85 515 50 515 30 510-5 490z"/>
                            <path transform="translate(1392 -15)" d="M-10 332L18 333 28 355 50 372 85 372 110 362 145 345 165 337 195 328 225 320 240 328 270 330 308 327 305 345 290 355 277 365 280 390 283 425 267 435 268 480 275 500 285 518 310 522 345 535 355 515 370 492 385 490 405 466 425 470 450 462 480 452 490 435 510 423 525 425 527 415 535 430 560 430 570 425 570 445 585 452 605 450 625 428 640 415 648 395 660 375 675 380 690 372 698 360 688 350 700 340 718 343 712 358 700 372 685 385 690 410 692 455 722 450 722 462 700 472 698 500 690 545 680 570 660 595 640 612 620 622 590 622 570 640 555 625 550 612 520 620 490 615 470 602 440 608 400 615 370 625 340 640 310 638 285 630 250 628 220 635 180 638 150 650 110 658 70 652 40 657 0 650-20 655z"/>
                        </g>
                        <!-- class 2 -->
                        <g fill="#2e2e2e" shape-rendering="crispEdges">
                            <path transform="translate(-18 -15)" d="M42 335L45 315 50 290 60 270 58 240 65 215 75 192 85 205 105 218 130 222 150 216 165 205 180 198 182 165 185 150 178 120 172 85 172 50 188 40 204 50 208 85 205 110 202 150 200 165 208 175 212 190 206 205 220 215 240 208 248 200 232 185 240 175 260 177 265 190 285 195 300 200 300 225 305 245 315 262 332 265 338 250 342 225 355 212 380 207 410 212 425 225 445 235 455 252 470 262 485 258 490 248 505 248 525 240 545 236 560 222 572 230 574 260 566 285 550 308 560 315 590 330 622 340 630 355 640 365 650 345 660 335 685 325 720 320 742 325 742 484 720 478 700 465 680 462 640 468 600 475 560 472 520 458 470 458 440 462 400 452 380 436 360 425 340 432 320 430 295 415 270 412 255 400 240 385 235 400 220 418 190 425 160 418 145 410 130 425 110 425 90 405 75 398 60 388 45 372z"/>
                            <path transform="translate(-18 -15)" d="M475 135L485 112 505 108 520 130 522 155 505 172 485 175 470 165 480 150zM430 160L440 152 455 155 462 165 450 175 435 174zM62 150L72 130 92 140 94 160 84 175 68 170z"/>
                            <path transform="translate(672 -15)" d="M0 325L45 325 75 328 120 318 150 315 165 295 185 288 230 282 270 280 310 280 350 280 390 288 398 300 385 320 385 345 400 370 410 395 430 420 440 450 440 485 460 505 473 530 460 540 425 540 400 555 375 550 355 532 320 530 290 530 270 540 250 555 230 548 215 530 195 522 170 530 150 540 130 540 110 525 95 505 75 500 40 498 20 485 0 475z"/>
                            <path transform="translate(672 -15)" d="M498 415L505 395 520 382 542 390 546 410 542 440 555 465 548 473 530 462 500 435z"/>
                            <circle cx="1297" cy="482" r="11"/>
                            <ellipse cx="1185" cy="653" rx="15" ry="12"/>
                            <path transform="translate(1392 -15)" d="M-8 435L10 410 40 402 58 408 62 425 57 465 70 485 92 487 102 470 102 420 115 405 140 402 170 410 195 430 208 460 215 500 228 540 225 558 165 555 150 590 130 612 90 612 60 600 30 590 28 575 36 550 25 535 0 532-5 515 15 490 15 470 0 455zM360 560L370 540 400 515 440 500 450 480 465 468 480 472 495 490 503 515 490 530 460 550 440 575 410 590 380 590 360 575zM560 550L570 530 590 520 605 540 611 565 595 574 570 568zM198 370L208 366 218 372 216 380 202 380z"/>
                        </g>
                        <!-- class 3 -->
                        <g fill="#646464" shape-rendering="crispEdges">
                            <path transform="translate(-18 -15)" d="M58 235L70 220 85 215 100 222 118 235 130 250 140 260 150 245 165 233 185 230 197 238 195 255 180 275 185 290 200 295 212 285 218 262 212 245 225 237 250 233 268 237 262 255 265 270 290 270 320 282 345 285 352 265 352 240 362 225 385 222 410 224 420 240 428 265 450 275 480 300 500 320 520 335 550 335 580 345 605 358 612 375 600 390 590 405 605 412 630 418 640 432 625 445 600 452 580 455 560 452 530 442 490 446 460 440 420 442 390 430 370 415 350 425 325 425 310 410 285 408 268 395 262 375 250 365 235 368 225 385 215 405 190 410 165 400 150 380 125 372 105 378 110 395 130 405 120 420 100 410 90 395 65 385 50 375 42 350 45 325 55 300 62 275 60 250z"/>
                            <path transform="translate(-18 -15)" d="M175 75L182 62 192 62 200 78 200 98 192 110 182 108 175 92zM66 135L76 134 86 148 84 160 70 158z"/>
                            <path transform="translate(672 -15)" d="M208 390L225 375 255 372 285 380 315 393 325 380 350 372 375 380 395 405 407 440 395 460 375 470 360 495 335 500 300 498 260 482 245 455 225 425 210 405z"/>
                            <ellipse cx="814" cy="471" rx="40" ry="33"/>
                            <ellipse cx="965" cy="298" rx="18" ry="11"/>
                            <ellipse cx="1537" cy="443" rx="23" ry="27"/>
                            <ellipse cx="1489" cy="537" rx="26" ry="25"/>
                        </g>
                        <g fill="#000" shape-rendering="crispEdges">
                            <ellipse cx="1070" cy="485" rx="27" ry="25"/>
                            <ellipse cx="878" cy="441" rx="20" ry="16" transform="rotate(40 878 441)"/>
                        </g>
                        <!-- class 4 -->
                        <g fill="#aaa" shape-rendering="crispEdges">
                            <path transform="translate(-18 -15)" d="M80 240L92 235 105 250 110 275 120 290 118 305 100 310 75 320 65 327 57 322 68 310 75 290 80 270zM114 343L120 337 132 337 134 345 126 350 116 349z"/>
                            <path transform="translate(-18 -15)" d="M232 285L245 275 252 290 252 310 275 300 300 298 325 300 350 300 380 285 405 275 430 285 460 300 485 320 500 340 520 355 545 350 570 352 590 362 595 375 580 385 575 400 585 418 605 425 615 435 600 447 580 443 550 430 520 432 500 440 470 432 430 435 400 430 380 412 355 405 330 428 315 420 310 405 285 402 265 395 260 370 245 358 225 365 210 390 190 397 178 385 195 370 195 335 215 315 230 300z"/>
                            <ellipse cx="955" cy="425" rx="17" ry="22" transform="rotate(-30 955 425)"/>
                        </g>
                        <!-- class 5 -->
                        <g fill="#fff" shape-rendering="crispEdges">
                            <path transform="translate(-18 -15)" d="M270 400L275 378 275 345 285 328 290 335 290 358 305 360 320 375 315 390 290 395 272 405zM320 325L335 318 365 318 385 305 405 298 425 308 430 318 455 320 480 342 492 365 490 385 475 400 455 408 435 400 420 380 405 375 402 390 415 400 415 415 402 424 385 412 370 395 360 385 358 360 350 350 325 345zM550 378L560 372 570 385 562 402 550 395z"/>
                        </g>
                    </svg>
                </div>
                <div class="classic-v">
                    <button class="sb" aria-label="Scroll up"><i class="tri up"></i></button>
                    <span class="sb fill"></span>
                    <button class="sb" aria-label="Scroll down"><i class="tri down"></i></button>
                </div>
            </div>
            <div class="view-foot">
                <button class="mini pressed" aria-label="Data view"><svg><use href="#globe"/></svg></button>
                <button class="mini" aria-label="Layout view"><svg><use href="#new"/></svg></button>
                <span class="sep"></span>
                <button class="mini" aria-label="Refresh"><svg><use href="#refresh"/></svg></button>
                <button class="mini" aria-label="Pause drawing"><svg><use href="#pause"/></svg></button>
                <button class="sb" aria-label="Scroll left"><i class="tri left"></i></button>
                <span class="sb fill"></span>
                <button class="sb" aria-label="Scroll right"><i class="tri right"></i></button>
            </div>
        </section>
    </main>

    <footer class="statusbar">
        <span class="pane"></span>
        <span class="pane coords">720059.084&nbsp; 3948590.714 Unknown Units</span>
    </footer>
</body>
</html>
```

FILE: styles.css
```css
* {
    box-sizing: border-box;
}
body {
    margin: 0;
    height: 100vh;
    display: flex;
    flex-direction: column;
    background: #f0f0f0;
    color: #000;
    font-family: "Noto Sans", "Open Sans", sans-serif;
    font-size: 11px;
    line-height: 18px;
    overflow: hidden;
}
button, select {
    font: inherit;
    color: inherit;
    margin: 0;
    padding: 0;
    border: none;
    border-radius: 0;
    background: none;
}
ul {
    list-style: none;
    margin: 0;
    padding: 0;
}
svg {
    width: 16px;
    height: 16px;
    flex: none;
    shape-rendering: crispEdges;
}
.sprite {
    display: none;
}

/* menu and toolbars */
.menubar {
    display: flex;
    gap: 7px;
    height: 27px;
    padding: 4px 7px;
    border-right: 1px solid #a0a0a0;
    border-bottom: 1px solid #a0a0a0;
    font-size: 12px;
    flex: none;
}
.menubar a {
    color: #000;
    text-decoration: none;
}
.toolbar-row {
    display: flex;
    flex: none;
    height: 30px;
}
.toolbar {
    display: flex;
    align-items: center;
    padding: 0 3px;
    border-top: 1px solid #fff;
    border-right: 1px solid #a0a0a0;
    border-bottom: 1px solid #a0a0a0;
}
.docked {
    border-left: 1px solid #fff;
    padding: 0 4px 0 0;
}
.grip {
    width: 2px;
    height: 24px;
    margin: 0 5px 0 1px;
    border-right: 1px solid #a0a0a0;
}
.docked-menu .grip {
    margin-right: 7px;
}
.tool {
    width: 24px;
    height: 24px;
    display: flex;
    align-items: center;
    justify-content: center;
    flex: none;
}
.tool:disabled {
    color: #a0a0a0;
}
.tool:disabled svg {
    filter: drop-shadow(1px 1px 0 #fff);
}
.navy {
    color: #008;
}
.raised {
    border: 1px solid;
    border-color: #fff #a0a0a0 #a0a0a0 #fff;
}
.pressed {
    border: 1px solid;
    border-color: #a0a0a0 #fff #fff #a0a0a0;
    background: #f8f8f8;
}
.sep {
    width: 2px;
    height: 24px;
    margin: 0 2px;
    border-left: 1px solid #a0a0a0;
    border-right: 1px solid #fff;
    flex: none;
}
.caret {
    width: 0;
    height: 0;
    border: 4px solid transparent;
    border-top-color: #000;
    border-bottom: none;
}
.menu-button {
    display: flex;
    align-items: center;
    justify-content: space-between;
    padding: 0 1px 0 4px;
    white-space: nowrap;
}
.menu-3d {
    width: 73px;
}
.menu-editor {
    width: 49px;
}
.menu-georef {
    width: 97px;
}
.menu-spatial {
    width: 93px;
}
.drop-only {
    width: 16px;
    height: 24px;
    display: flex;
    align-items: center;
    justify-content: center;
}
.drop-only.raised {
    width: 14px;
    margin-right: 5px;
}
.tool-label {
    width: 34px;
    margin-left: 7px;
    font: 11px/18px "Liberation Sans", Arial, sans-serif;
}
.tool-label.wide {
    width: 42px;
}
.ui-text {
    font: 11px/18px "Noto Sans", "Open Sans", sans-serif;
}
.off {
    color: #a0a0a0;
    text-shadow: 1px 1px 0 #fff;
}
.combo {
    display: flex;
    align-items: center;
    height: 20px;
    margin-right: 6px;
    background: #fff;
    border: 2px solid;
    border-color: #696969 #a0a0a0 #a0a0a0 #696969;
    flex: none;
}
.combo select {
    appearance: none;
    flex: 1;
    min-width: 0;
    height: 16px;
    padding-left: 1px;
    font: 11px/16px "Liberation Sans", Arial, sans-serif;
}
.combo .ui-text {
    padding-left: 4px;
    font: 11px/16px "Noto Sans", "Open Sans", sans-serif;
}
.combo.disabled {
    background: #f0f0f0;
    border-color: #a0a0a0;
}
.combo.disabled select {
    color: #6d6d6d;
    opacity: 1;
}
.disabled .caret {
    border-top-color: #a0a0a0;
}
.drop {
    display: flex;
    align-items: center;
    justify-content: center;
    width: 16px;
    height: 16px;
    background: #f0f0f0;
    border: 1px solid;
    border-color: #fff #696969 #696969 #fff;
    flex: none;
}
.combo-3d {
    width: 190px;
}
.combo-zoom {
    width: 58px;
}
.combo-zoom .ui-text {
    padding-left: 1px;
}
.combo-task {
    width: 181px;
}
.combo-target {
    width: 176px;
}
.combo-georef {
    width: 189px;
}
.combo-scale {
    width: 146px;
}
.combo-spatial {
    width: 178px;
}

/* docked panels */
.workspace {
    display: flex;
    flex: 1;
    min-height: 0;
    border-top: 1px solid #a0a0a0;
    border-bottom: 1px solid #a0a0a0;
}
.panel {
    display: flex;
    flex-direction: column;
    flex: none;
    padding: 4px 2px 3px 0;
    border-right: 1px solid #a0a0a0;
}
.panel-toc {
    width: 265px;
}
.panel-toolbox {
    width: 216px;
    padding-right: 4px;
    padding-left: 6px;
}
.panel-head {
    display: flex;
    align-items: center;
    justify-content: space-between;
    gap: 3px;
    height: 12px;
    flex: none;
}
.handle {
    flex: 1;
    height: 6px;
    border: 1px solid #a0a0a0;
    border-left: none;
    background: #fff;
}
.close {
    display: flex;
    align-items: center;
    justify-content: center;
    width: 12px;
    height: 12px;
    border: 1px solid;
    border-color: #fff #a0a0a0 #a0a0a0 #fff;
}
.close svg {
    width: 7px;
    height: 7px;
    shape-rendering: auto;
}
.panel-frame {
    display: flex;
    flex-direction: column;
    flex: 1;
    min-height: 0;
    padding: 5px 4px 2px 3px;
    border-right: 2px solid #808080;
    border-bottom: 2px solid #808080;
}
.panel-toolbox .panel-frame {
    padding-left: 4px;
}
.toc, .tree-area {
    border-top: 1px solid #696969;
    border-left: 1px solid #696969;
    background: #fff;
    flex: 1;
    min-height: 0;
}
.toc li {
    display: flex;
    align-items: center;
    height: 18px;
    white-space: nowrap;
}
.toc .root {
    padding-left: 4px;
}
.root svg {
    margin: 0 5px 0 6px;
}
.toc .layer {
    padding-left: 23px;
}
.toc .heading {
    padding-left: 78px;
}
.toc .legend {
    padding-left: 58px;
    gap: 3px;
}
.toc .ramp-row {
    height: 54px;
    padding-left: 58px;
    gap: 4px;
}
.ramp {
    width: 14px;
    height: 46px;
    background: linear-gradient(#fff, #000);
}
.ramp-row div {
    display: flex;
    flex-direction: column;
    justify-content: space-between;
    height: 54px;
}
.swatch {
    width: 15px;
    height: 11px;
    border: 1px solid #6e6e6e;
}
.s1 { background: #000; }
.s2 { background: #2e2e2e; }
.s3 { background: #646464; }
.s4 { background: #aaa; }
.s5 { background: #fff; }
.s6 { background: #bedcfa; }
.layer input {
    appearance: none;
    display: flex;
    width: 11px;
    height: 11px;
    margin: 0 7px 0 7px;
    border: 1px solid #000;
    background: #fff;
}
.layer input:checked::before {
    content: "";
    flex: 1;
    margin: 1px;
    background: #000;
    clip-path: polygon(0 40%, 40% 65%, 100% 0, 100% 40%, 40% 100%, 0 75%);
}
.layer label {
    height: 18px;
    padding: 0 2px;
    line-height: 17px;
}
.layer .selected {
    background: #39f;
    color: #fff;
    outline: 1px dotted #420;
    outline-offset: -1px;
}
.box {
    width: 9px;
    height: 9px;
    border: 1px solid #808080;
    background: linear-gradient(#000, #000) center / 5px 1px no-repeat #fff;
    flex: none;
}
.plus {
    background: linear-gradient(#000, #000) center / 5px 1px no-repeat, linear-gradient(#000, #000) center / 1px 5px no-repeat #fff;
}
.tree-area {
    display: flex;
}
.tree {
    flex: 1;
    min-width: 0;
    overflow: hidden;
}
.tree li {
    display: flex;
    align-items: center;
    height: 18px;
    white-space: nowrap;
}
.tree svg {
    margin-right: 5px;
}
/* dotted connector lines */
.guide {
    display: flex;
    align-items: center;
    justify-content: center;
    width: 19px;
    height: 18px;
    background: repeating-linear-gradient(#808080 0 1px, transparent 1px 2px) 9px 0 / 1px 18px no-repeat;
    flex: none;
}
.leaf {
    background: repeating-linear-gradient(#808080 0 1px, transparent 1px 2px) 9px 0 / 1px 18px no-repeat,
        repeating-linear-gradient(90deg, #808080 0 1px, transparent 1px 2px) 9px 9px / 10px 1px no-repeat;
}
.last {
    background-size: 1px 9px, 10px 1px;
}
.hot {
    margin-left: -2px;
    padding: 0 2px;
    background: #f0f0f0;
}
.vscroll {
    display: flex;
    flex-direction: column;
    align-items: center;
    width: 16px;
    padding: 6px 0;
    background: #f0f0f0;
}
.vscroll .track {
    flex: 1;
    display: flex;
    flex-direction: column;
    width: 15px;
    margin: 3px 0;
}
.vscroll .thumb {
    height: 57%;
    margin-top: 97px;
    background: repeating-linear-gradient(#777 0 1px, transparent 1px 3px) center / 7px 7px no-repeat, linear-gradient(90deg, #f4f4f4 40%, #d0d0d0);
}
.thumb {
    border: 1px solid #979797;
    border-radius: 2px;
}
.hscroll {
    display: flex;
    align-items: center;
    height: 17px;
    padding: 0 22px 0 6px;
    border-left: 1px solid #696969;
    flex: none;
}
.hscroll .track {
    flex: 1;
    display: flex;
    margin: 0 8px;
}
.hscroll .thumb {
    width: 84%;
    height: 15px;
    background: repeating-linear-gradient(90deg, #777 0 1px, transparent 1px 3px) center / 7px 7px no-repeat, linear-gradient(#f4f4f4 50%, #d0d0d0);
}
.tri {
    width: 0;
    height: 0;
    border: 4px solid transparent;
}
.up {
    border-bottom-color: #000;
    border-top: none;
}
.down {
    border-top-color: #000;
    border-bottom: none;
}
.left {
    border-right-color: #000;
    border-left: none;
}
.right {
    border-left-color: #000;
    border-right: none;
}
.tabs {
    display: flex;
    align-items: flex-start;
    height: 21px;
    font: 11px/18px "Liberation Sans", Arial, sans-serif;
    flex: none;
}
.tab {
    height: 19px;
    padding: 0 4px;
    border: solid #696969;
    border-width: 0 2px 2px 1px;
    border-left-color: #fff;
    border-radius: 0 0 3px 3px;
}
.tab.active {
    height: 21px;
    padding: 2px 5px 0;
    border-width: 0 1px 1px 0;
}

/* map view */
.view {
    display: flex;
    flex-direction: column;
    flex: 1;
    min-width: 0;
    margin-right: 2px;
    border-top: 1px solid #696969;
    border-right: 1px solid #696969;
}
.view-body {
    display: flex;
    flex: 1;
    min-height: 0;
}
.canvas {
    display: flex;
    align-items: center;
    flex: 1;
    min-width: 0;
    padding: 27px 35px 0;
    background: #fdfffe;
}
.map {
    width: 100%;
    height: auto;
    flex: 1;
}
.classic-v {
    display: flex;
    flex-direction: column;
    width: 15px;
    flex: none;
}
.sb {
    display: flex;
    align-items: center;
    justify-content: center;
    width: 15px;
    height: 16px;
    border: 1px solid;
    border-color: #fff #696969 #696969 #fff;
    background: #f0f0f0;
    flex: none;
}
.classic-v .fill {
    flex: 1;
}
.view-foot {
    display: flex;
    align-items: center;
    height: 19px;
    padding-right: 16px;
    flex: none;
}
.view-foot .fill {
    flex: 1;
    margin: 0 2px;
}
.view-foot .sep {
    height: 14px;
    margin: 0 3px;
}
.mini {
    display: flex;
    align-items: center;
    justify-content: center;
    width: 17px;
    height: 16px;
}
.mini svg {
    width: 10px;
    height: 10px;
}

/* status bar */
.statusbar {
    display: flex;
    justify-content: flex-end;
    gap: 3px;
    height: 22px;
    padding-top: 3px;
    border-bottom: 2px solid #222;
    flex: none;
}
.pane {
    width: 21px;
    border-top: 1px solid #a0a0a0;
    border-left: 1px solid #a0a0a0;
}
.coords {
    width: 306px;
    line-height: 16px;
}
```
